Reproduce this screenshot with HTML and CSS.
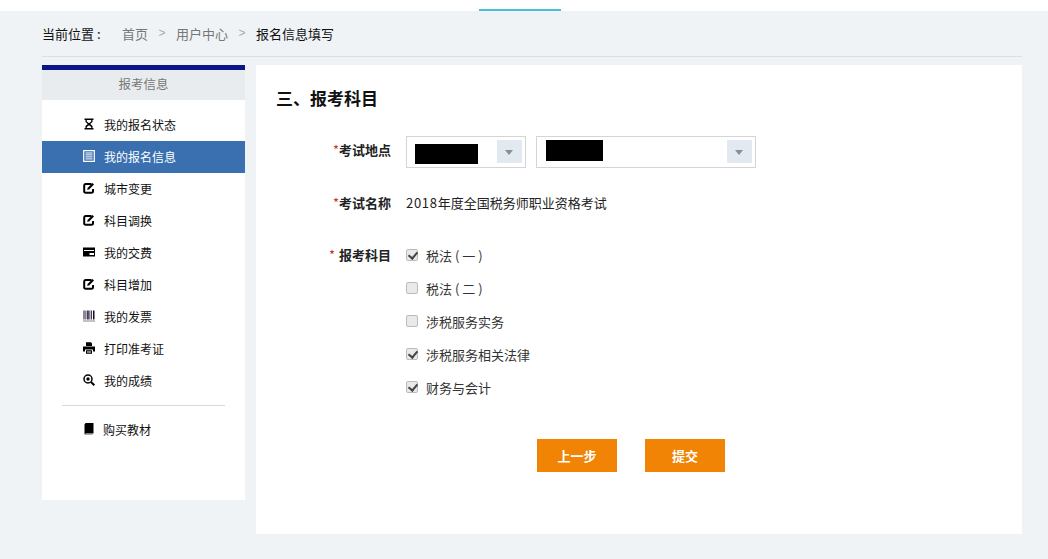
FILE: index.html
```html
<!DOCTYPE html>
<html lang="zh-CN">
<head>
<meta charset="utf-8">
<title>报名信息填写</title>
<link rel="stylesheet" href="styles.css">
</head>
<body>
<svg class="defs" width="0" height="0" aria-hidden="true">
  <symbol id="i-edit" viewBox="0 0 12 12"><path d="M8.500 2H2.600A1.400 1.400 0 0 0 1.200 3.400v6A1.400 1.400 0 0 0 2.600 10.800h6A1.400 1.400 0 0 0 10 9.400V7" fill="none" stroke="#000" stroke-width="2"/><path d="M4.600 5.900 9.400 1l1.600 1.600-4.900 4.800-2 .4z" fill="#000"/></symbol>
</svg>
<header class="topbar"><span class="topline"></span></header>
<div class="wrap">
  <nav class="crumbs">
    <span class="crumb-label">当前位置 :</span>
    <span class="crumb-link">首页</span><span class="crumb-sep">&gt;</span>
    <span class="crumb-link">用户中心</span><span class="crumb-sep">&gt;</span>
    <span class="crumb-now">报名信息填写</span>
  </nav>
  <div class="columns">
    <aside class="side">
      <h2 class="side-head">报考信息</h2>
      <ul class="menu">
        <li class="item"><svg class="ico" viewBox="0 0 12 12"><path d="M1.500 .5h9v1.500H9.500v2L7.200 6l2.300 2v2h1V11.500h-9V10h1V8l2.300-2L2.500 4V2H1.500z" fill="#000"/><path d="M3.800 2h4.400v1.400L6 5.200 3.800 3.400zM6 7.200 3.800 9v1h4.400V9z" fill="#fff"/></svg><span>我的报名状态</span></li>
        <li class="item active"><svg class="ico" viewBox="0 0 12 12"><path d="M.7 .7h10.600v10.600H.7z" fill="none" stroke="#fff" stroke-width="1.200"/><path d="M2.500 3h7M2.500 4.900h7M2.500 6.900h7M2.500 8.900h7" stroke="#fff" stroke-width="1"/></svg><span>我的报名信息</span></li>
        <li class="item"><svg class="ico"><use href="#i-edit"/></svg><span>城市变更</span></li>
        <li class="item"><svg class="ico"><use href="#i-edit"/></svg><span>科目调换</span></li>
        <li class="item"><svg class="ico" viewBox="0 0 12 12"><path d="M0 1.500h12v9H0zM1 4v1h10V4zM6.500 7v2H11V7z" fill="#000" fill-rule="evenodd"/></svg><span>我的交费</span></li>
        <li class="item"><svg class="ico"><use href="#i-edit"/></svg><span>科目增加</span></li>
        <li class="item"><svg class="ico" viewBox="0 0 12 12"><path d="M.5 .5h1v9h-1zM2.500 .5h.8v9h-.8zM4.200 .5h1.500v9H4.200zM6.500 .5h.8v9h-.8zM8.200 .5h.8v9h-.8zM10 .5h1.500v9H10zM.5 10.500h1v1h-1zM2.500 10.500h1v1h-1zM4.500 10.500h1v1h-1zM6.500 10.500h1v1h-1zM8.500 10.500h1v1h-1zM10.500 10.500h1v1h-1z" fill="#1a0a2a"/></svg><span>我的发票</span></li>
        <li class="item"><svg class="ico" viewBox="0 0 12 12"><path d="M3 .2h5l1 1.200V4H3zM0 4.500h12V9.500h-2V7.500H2v2H0zM3 8.200h6v3.500H3z" fill="#000"/><path d="M4 9.200h4v.6H4zM4 10.400h4v.6H4z" fill="#fff"/></svg><span>打印准考证</span></li>
        <li class="item"><svg class="ico" viewBox="0 0 12 12"><circle cx="5" cy="5" r="4" fill="none" stroke="#000" stroke-width="1.500"/><circle cx="5" cy="5" r="1.700" fill="#000"/><path d="m8 8 3.300 3.300" stroke="#000" stroke-width="2"/></svg><span>我的成绩</span></li>
      </ul>
      <ul class="menu menu-extra">
        <li class="item"><svg class="ico" viewBox="0 0 12 12"><path d="M1.500 1.500 2.500 0h8v10.500H2.800L1.500 11.500z" fill="#000"/><path d="M2 12H9.500" stroke="#555" stroke-width="1"/></svg><span>购买教材</span></li>
      </ul>
    </aside>
    <main class="panel">
      <h1 class="title">三、报考科目</h1>
      <div class="row row-place">
        <div class="label"><i class="req">*</i>考试地点</div>
        <div class="selects">
          <div class="select sel-a"><span class="mask mask-a"></span><span class="arrow"></span></div>
          <div class="select sel-b"><span class="mask mask-b"></span><span class="arrow"></span></div>
        </div>
      </div>
      <div class="row row-name">
        <div class="label"><i class="req">*</i>考试名称</div>
        <div class="value"><span class="digits">2018</span>年度全国税务师职业资格考试</div>
      </div>
      <div class="row row-subj">
        <div class="label"><i class="req spaced">*</i>报考科目</div>
        <div class="checks">
          <label class="check"><input type="checkbox" checked><span>税法 ( 一 )</span></label>
          <label class="check"><input type="checkbox"><span>税法 ( 二 )</span></label>
          <label class="check"><input type="checkbox"><span>涉税服务实务</span></label>
          <label class="check"><input type="checkbox" checked><span>涉税服务相关法律</span></label>
          <label class="check"><input type="checkbox" checked><span>财务与会计</span></label>
        </div>
      </div>
      <div class="actions">
        <button class="btn" type="button">上一步</button>
        <button class="btn" type="button">提交</button>
      </div>
    </main>
  </div>
</div>
</body>
</html>
```
FILE: styles.css
```css
* { box-sizing: border-box; }
html, body { margin: 0; padding: 0; }
body {
  width: 1048px;
  height: 559px;
  overflow: hidden;
  background: #eff3f6;
  color: #111;
  font-family: "Noto Sans CJK SC", "Liberation Sans", sans-serif;
  font-size: 13px;
}
.defs { position: absolute; }
.topbar { height: 11px; background: #fff; padding-left: 479px; padding-top: 9px; }
.topline { display: block; width: 82px; height: 2px; background: #4dbcd6; }
.wrap { width: 980px; margin-left: 42px; }
.crumbs {
  height: 46px;
  border-bottom: 1px solid #dcdfe2;
  display: flex;
  align-items: center;
  line-height: 45px;
}
.crumb-label { width: 80px; color: #111; }
.crumb-link { color: #777; }
.crumb-sep { color: #aaa; width: 28px; text-align: center; font-family: "Liberation Sans", sans-serif; font-size: 12px; }
.crumb-now { color: #111; }
.columns { display: flex; gap: 11px; margin-top: 8px; align-items: flex-start; }
.side { width: 203px; height: 435px; background: #fff; border-top: 5px solid #0c1787; }
.side-head {
  margin: 0;
  height: 30px;
  line-height: 27px;
  background: #e8ecef;
  color: #777;
  font-size: 12.5px;
  font-weight: normal;
  text-align: center;
}
.menu { list-style: none; margin: 9px 0 0; padding: 0; }
.menu-extra { margin: 8px 20px 0; border-top: 1px solid #d8d8d8; padding-top: 8px; }
.item {
  height: 32px;
  display: flex;
  align-items: center;
  padding: 0 0 2px 41px;
  font-size: 12px;
  color: #111;
}
.menu-extra .item { padding-left: 21px; }
.menu-extra .ico { margin-right: 8px; }
.item.active { background: #3a70af; color: #fff; }
.ico { width: 12px; height: 12px; margin-right: 9px; flex: none; }
.panel { width: 766px; height: 469px; background: #fff; padding: 20px 0 0 20px; }
.title { margin: 0; font-size: 17px; line-height: 26px; font-weight: bold; color: #111; }
.row { display: flex; }
.row-place { margin-top: 25px; }
.row-name { margin-top: 22px; }
.row-subj { margin-top: 26px; }
.label { width: 115px; text-align: right; font-weight: bold; color: #222; flex: none; line-height: 26px; }
.row-place .label { line-height: 28px; }
.req { color: #c0392b; font-style: normal; font-weight: normal; }
.req.spaced { margin-right: 4px; }
.value { margin-left: 15px; color: #222; line-height: 26px; }
.digits { letter-spacing: .7px; }
.selects { display: flex; gap: 10px; margin-left: 15px; }
.select { height: 32px; border: 1px solid #d4d4d4; background: #fff; display: flex; justify-content: space-between; padding: 3px; }
.sel-a { width: 120px; }
.sel-b { width: 220px; }
.mask { display: block; background: #000; }
.mask-a { width: 63px; height: 20px; margin: 4px 0 0 5px; }
.mask-b { width: 57px; height: 21px; margin: 0 0 0 6px; }
.arrow { width: 25px; height: 23px; background: #e2e9f1; position: relative; }
.arrow::after {
  content: "";
  position: absolute;
  left: 8px;
  top: 10px;
  border-left: 4px solid transparent;
  border-right: 4px solid transparent;
  border-top: 5px solid #8b8f93;
}
.checks { margin-left: 15px; display: flex; flex-direction: column; gap: 7px; }
.check { height: 26px; display: flex; align-items: center; color: #333; }
.check input {
  appearance: none;
  width: 12px;
  height: 12px;
  margin: 0 8px 0 0;
  border: 1px solid #bbb;
  border-radius: 2px;
  background: #e9e9e9;
  position: relative;
}
.check input:checked::after {
  content: "";
  position: absolute;
  left: 3px;
  top: 0;
  width: 4px;
  height: 7px;
  border: solid #444;
  border-width: 0 2px 2px 0;
  transform: rotate(40deg);
}
.actions { display: flex; gap: 28px; margin-top: 39px; padding-left: 261px; }
.btn {
  width: 80px;
  height: 33px;
  border: 0;
  padding: 0;
  background: #f18405;
  color: #fff;
  font: bold 13px "Noto Sans CJK SC", sans-serif;
}
```
